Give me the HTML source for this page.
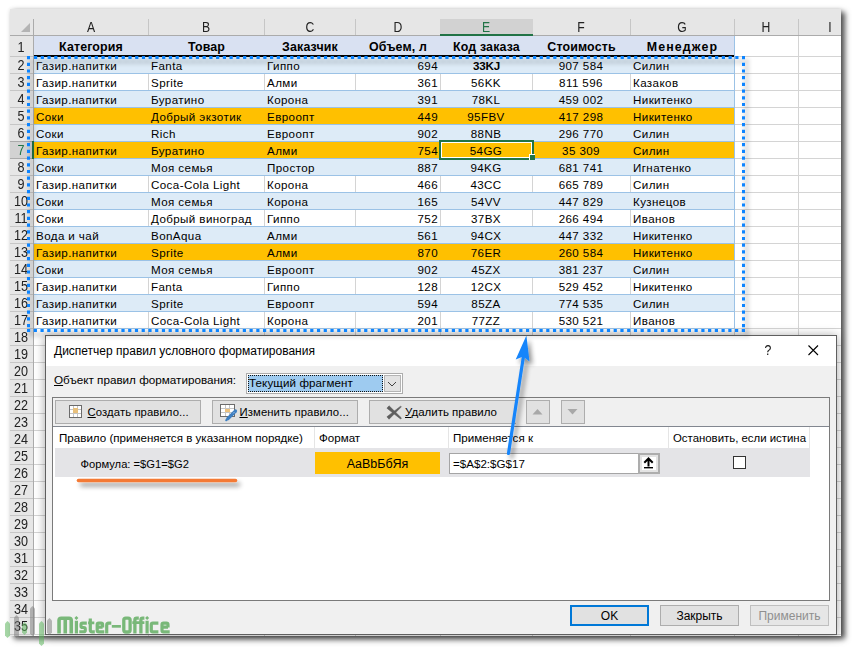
<!DOCTYPE html>
<html><head><meta charset="utf-8"><style>
html,body{margin:0;padding:0;}
body{width:852px;height:647px;position:relative;overflow:hidden;background:#fff;font-family:"Liberation Sans", sans-serif;}
body>div{position:absolute;box-sizing:content-box;}
.t{line-height:0;white-space:nowrap;}
#shadow{left:10px;top:9px;width:831px;height:627px;box-shadow:4px 3px 5.5px rgba(0,0,0,0.68),0 0 4px rgba(0,0,0,0.12);background:#fff}
</style></head><body>
<div id="shadow"></div>
<div style="left:10px;top:9px;width:831px;height:627px;background:#ffffff;"></div>
<div style="left:10px;top:9px;width:831px;height:26px;background:#e6e6e6;"></div>
<div style="left:441px;top:19px;width:91px;height:16px;background:#d2d2d2;"></div>
<div style="left:10px;top:35px;width:831px;height:1px;background:#ababab;"></div>
<div style="left:148px;top:19px;width:1px;height:16px;background:#c6c6c6;"></div>
<div style="left:264px;top:19px;width:1px;height:16px;background:#c6c6c6;"></div>
<div style="left:355px;top:19px;width:1px;height:16px;background:#c6c6c6;"></div>
<div style="left:440px;top:19px;width:1px;height:16px;background:#c6c6c6;"></div>
<div style="left:532px;top:19px;width:1px;height:16px;background:#c6c6c6;"></div>
<div style="left:630px;top:19px;width:1px;height:16px;background:#c6c6c6;"></div>
<div style="left:734px;top:19px;width:1px;height:16px;background:#c6c6c6;"></div>
<div style="left:798px;top:19px;width:1px;height:16px;background:#c6c6c6;"></div>
<div style="left:440px;top:19px;width:93px;height:16px;background:#d2d2d2;border-left:0"></div>
<div style="left:440px;top:34px;width:93px;height:2px;background:#217346;"></div>
<div style="left:10px;top:36px;width:23px;height:600px;background:#e6e6e6;"></div>
<div style="left:33px;top:19px;width:1px;height:617px;background:#ababab;"></div>
<div style="left:10px;top:142px;width:23px;height:16px;background:#d2d2d2;"></div>
<svg style="position:absolute;left:20px;top:22px" width="11" height="11"><path d="M10 1 L10 10 L1 10 Z" fill="#b4b4b4"/></svg>
<div style="left:10px;top:56px;width:23px;height:1px;background:#c6c6c6;"></div>
<div style="left:34px;top:56px;width:807px;height:1px;background:#d4d4d4;"></div>
<div style="left:10px;top:73px;width:23px;height:1px;background:#c6c6c6;"></div>
<div style="left:34px;top:73px;width:807px;height:1px;background:#d4d4d4;"></div>
<div style="left:10px;top:90px;width:23px;height:1px;background:#c6c6c6;"></div>
<div style="left:34px;top:90px;width:807px;height:1px;background:#d4d4d4;"></div>
<div style="left:10px;top:107px;width:23px;height:1px;background:#c6c6c6;"></div>
<div style="left:34px;top:107px;width:807px;height:1px;background:#d4d4d4;"></div>
<div style="left:10px;top:124px;width:23px;height:1px;background:#c6c6c6;"></div>
<div style="left:34px;top:124px;width:807px;height:1px;background:#d4d4d4;"></div>
<div style="left:10px;top:141px;width:23px;height:1px;background:#c6c6c6;"></div>
<div style="left:34px;top:141px;width:807px;height:1px;background:#d4d4d4;"></div>
<div style="left:10px;top:158px;width:23px;height:1px;background:#c6c6c6;"></div>
<div style="left:34px;top:158px;width:807px;height:1px;background:#d4d4d4;"></div>
<div style="left:10px;top:175px;width:23px;height:1px;background:#c6c6c6;"></div>
<div style="left:34px;top:175px;width:807px;height:1px;background:#d4d4d4;"></div>
<div style="left:10px;top:192px;width:23px;height:1px;background:#c6c6c6;"></div>
<div style="left:34px;top:192px;width:807px;height:1px;background:#d4d4d4;"></div>
<div style="left:10px;top:209px;width:23px;height:1px;background:#c6c6c6;"></div>
<div style="left:34px;top:209px;width:807px;height:1px;background:#d4d4d4;"></div>
<div style="left:10px;top:226px;width:23px;height:1px;background:#c6c6c6;"></div>
<div style="left:34px;top:226px;width:807px;height:1px;background:#d4d4d4;"></div>
<div style="left:10px;top:243px;width:23px;height:1px;background:#c6c6c6;"></div>
<div style="left:34px;top:243px;width:807px;height:1px;background:#d4d4d4;"></div>
<div style="left:10px;top:260px;width:23px;height:1px;background:#c6c6c6;"></div>
<div style="left:34px;top:260px;width:807px;height:1px;background:#d4d4d4;"></div>
<div style="left:10px;top:277px;width:23px;height:1px;background:#c6c6c6;"></div>
<div style="left:34px;top:277px;width:807px;height:1px;background:#d4d4d4;"></div>
<div style="left:10px;top:294px;width:23px;height:1px;background:#c6c6c6;"></div>
<div style="left:34px;top:294px;width:807px;height:1px;background:#d4d4d4;"></div>
<div style="left:10px;top:311px;width:23px;height:1px;background:#c6c6c6;"></div>
<div style="left:34px;top:311px;width:807px;height:1px;background:#d4d4d4;"></div>
<div style="left:10px;top:328px;width:23px;height:1px;background:#c6c6c6;"></div>
<div style="left:34px;top:328px;width:807px;height:1px;background:#d4d4d4;"></div>
<div style="left:10px;top:345px;width:23px;height:1px;background:#c6c6c6;"></div>
<div style="left:34px;top:345px;width:807px;height:1px;background:#d4d4d4;"></div>
<div style="left:10px;top:362px;width:23px;height:1px;background:#c6c6c6;"></div>
<div style="left:34px;top:362px;width:807px;height:1px;background:#d4d4d4;"></div>
<div style="left:10px;top:379px;width:23px;height:1px;background:#c6c6c6;"></div>
<div style="left:34px;top:379px;width:807px;height:1px;background:#d4d4d4;"></div>
<div style="left:10px;top:396px;width:23px;height:1px;background:#c6c6c6;"></div>
<div style="left:34px;top:396px;width:807px;height:1px;background:#d4d4d4;"></div>
<div style="left:10px;top:413px;width:23px;height:1px;background:#c6c6c6;"></div>
<div style="left:34px;top:413px;width:807px;height:1px;background:#d4d4d4;"></div>
<div style="left:10px;top:430px;width:23px;height:1px;background:#c6c6c6;"></div>
<div style="left:34px;top:430px;width:807px;height:1px;background:#d4d4d4;"></div>
<div style="left:10px;top:447px;width:23px;height:1px;background:#c6c6c6;"></div>
<div style="left:34px;top:447px;width:807px;height:1px;background:#d4d4d4;"></div>
<div style="left:10px;top:464px;width:23px;height:1px;background:#c6c6c6;"></div>
<div style="left:34px;top:464px;width:807px;height:1px;background:#d4d4d4;"></div>
<div style="left:10px;top:481px;width:23px;height:1px;background:#c6c6c6;"></div>
<div style="left:34px;top:481px;width:807px;height:1px;background:#d4d4d4;"></div>
<div style="left:10px;top:498px;width:23px;height:1px;background:#c6c6c6;"></div>
<div style="left:34px;top:498px;width:807px;height:1px;background:#d4d4d4;"></div>
<div style="left:10px;top:515px;width:23px;height:1px;background:#c6c6c6;"></div>
<div style="left:34px;top:515px;width:807px;height:1px;background:#d4d4d4;"></div>
<div style="left:10px;top:532px;width:23px;height:1px;background:#c6c6c6;"></div>
<div style="left:34px;top:532px;width:807px;height:1px;background:#d4d4d4;"></div>
<div style="left:10px;top:549px;width:23px;height:1px;background:#c6c6c6;"></div>
<div style="left:34px;top:549px;width:807px;height:1px;background:#d4d4d4;"></div>
<div style="left:10px;top:566px;width:23px;height:1px;background:#c6c6c6;"></div>
<div style="left:34px;top:566px;width:807px;height:1px;background:#d4d4d4;"></div>
<div style="left:10px;top:583px;width:23px;height:1px;background:#c6c6c6;"></div>
<div style="left:34px;top:583px;width:807px;height:1px;background:#d4d4d4;"></div>
<div style="left:10px;top:600px;width:23px;height:1px;background:#c6c6c6;"></div>
<div style="left:34px;top:600px;width:807px;height:1px;background:#d4d4d4;"></div>
<div style="left:10px;top:617px;width:23px;height:1px;background:#c6c6c6;"></div>
<div style="left:34px;top:617px;width:807px;height:1px;background:#d4d4d4;"></div>
<div style="left:10px;top:634px;width:23px;height:1px;background:#c6c6c6;"></div>
<div style="left:34px;top:634px;width:807px;height:1px;background:#d4d4d4;"></div>
<div style="left:148px;top:36px;width:1px;height:600px;background:#d4d4d4;"></div>
<div style="left:264px;top:36px;width:1px;height:600px;background:#d4d4d4;"></div>
<div style="left:355px;top:36px;width:1px;height:600px;background:#d4d4d4;"></div>
<div style="left:440px;top:36px;width:1px;height:600px;background:#d4d4d4;"></div>
<div style="left:532px;top:36px;width:1px;height:600px;background:#d4d4d4;"></div>
<div style="left:630px;top:36px;width:1px;height:600px;background:#d4d4d4;"></div>
<div style="left:734px;top:36px;width:1px;height:600px;background:#d4d4d4;"></div>
<div style="left:798px;top:36px;width:1px;height:600px;background:#d4d4d4;"></div>
<div style="left:10px;top:141px;width:23px;height:1px;background:#ababab;"></div>
<div style="left:10px;top:158px;width:23px;height:1px;background:#ababab;"></div>
<div style="left:32px;top:141px;width:2px;height:18px;background:#217346;"></div>
<div class="t" style="top:27.08px;font-size:14.2px;color:#222;transform:scaleX(0.86);left:-109.5px;width:400px;text-align:center;">A</div>
<div class="t" style="top:27.08px;font-size:14.2px;color:#222;transform:scaleX(0.86);left:6.0px;width:400px;text-align:center;">B</div>
<div class="t" style="top:27.08px;font-size:14.2px;color:#222;transform:scaleX(0.86);left:109.5px;width:400px;text-align:center;">C</div>
<div class="t" style="top:27.08px;font-size:14.2px;color:#222;transform:scaleX(0.86);left:197.5px;width:400px;text-align:center;">D</div>
<div class="t" style="top:27.08px;font-size:14.2px;color:#217346;transform:scaleX(0.86);left:286.0px;width:400px;text-align:center;">E</div>
<div class="t" style="top:27.08px;font-size:14.2px;color:#222;transform:scaleX(0.86);left:381.0px;width:400px;text-align:center;">F</div>
<div class="t" style="top:27.08px;font-size:14.2px;color:#222;transform:scaleX(0.86);left:482.0px;width:400px;text-align:center;">G</div>
<div class="t" style="top:27.08px;font-size:14.2px;color:#222;transform:scaleX(0.86);left:566.0px;width:400px;text-align:center;">H</div>
<div class="t" style="top:27.08px;font-size:14.2px;color:#222;transform:scaleX(0.86);left:630px;width:400px;text-align:center;">I</div>
<div class="t" style="top:47.15px;font-size:14px;color:#222;transform:scaleX(0.9);left:-179px;width:400px;text-align:center;">1</div>
<div class="t" style="top:65.15px;font-size:14px;color:#222;transform:scaleX(0.9);left:-179px;width:400px;text-align:center;">2</div>
<div class="t" style="top:82.15px;font-size:14px;color:#222;transform:scaleX(0.9);left:-179px;width:400px;text-align:center;">3</div>
<div class="t" style="top:99.15px;font-size:14px;color:#222;transform:scaleX(0.9);left:-179px;width:400px;text-align:center;">4</div>
<div class="t" style="top:116.15px;font-size:14px;color:#222;transform:scaleX(0.9);left:-179px;width:400px;text-align:center;">5</div>
<div class="t" style="top:133.15px;font-size:14px;color:#222;transform:scaleX(0.9);left:-179px;width:400px;text-align:center;">6</div>
<div class="t" style="top:150.15px;font-size:14px;color:#217346;transform:scaleX(0.9);left:-179px;width:400px;text-align:center;">7</div>
<div class="t" style="top:167.15px;font-size:14px;color:#222;transform:scaleX(0.9);left:-179px;width:400px;text-align:center;">8</div>
<div class="t" style="top:184.15px;font-size:14px;color:#222;transform:scaleX(0.9);left:-179px;width:400px;text-align:center;">9</div>
<div class="t" style="top:201.15px;font-size:14px;color:#222;transform:scaleX(0.9);left:-179px;width:400px;text-align:center;">10</div>
<div class="t" style="top:218.15px;font-size:14px;color:#222;transform:scaleX(0.9);left:-179px;width:400px;text-align:center;">11</div>
<div class="t" style="top:235.15px;font-size:14px;color:#222;transform:scaleX(0.9);left:-179px;width:400px;text-align:center;">12</div>
<div class="t" style="top:252.15px;font-size:14px;color:#222;transform:scaleX(0.9);left:-179px;width:400px;text-align:center;">13</div>
<div class="t" style="top:269.15px;font-size:14px;color:#222;transform:scaleX(0.9);left:-179px;width:400px;text-align:center;">14</div>
<div class="t" style="top:286.15px;font-size:14px;color:#222;transform:scaleX(0.9);left:-179px;width:400px;text-align:center;">15</div>
<div class="t" style="top:303.15px;font-size:14px;color:#222;transform:scaleX(0.9);left:-179px;width:400px;text-align:center;">16</div>
<div class="t" style="top:320.15px;font-size:14px;color:#222;transform:scaleX(0.9);left:-179px;width:400px;text-align:center;">17</div>
<div class="t" style="top:337.15px;font-size:14px;color:#222;transform:scaleX(0.9);left:-179px;width:400px;text-align:center;">18</div>
<div class="t" style="top:354.15px;font-size:14px;color:#222;transform:scaleX(0.9);left:-179px;width:400px;text-align:center;">19</div>
<div class="t" style="top:371.15px;font-size:14px;color:#222;transform:scaleX(0.9);left:-179px;width:400px;text-align:center;">20</div>
<div class="t" style="top:388.15px;font-size:14px;color:#222;transform:scaleX(0.9);left:-179px;width:400px;text-align:center;">21</div>
<div class="t" style="top:405.15px;font-size:14px;color:#222;transform:scaleX(0.9);left:-179px;width:400px;text-align:center;">22</div>
<div class="t" style="top:422.15px;font-size:14px;color:#222;transform:scaleX(0.9);left:-179px;width:400px;text-align:center;">23</div>
<div class="t" style="top:439.15px;font-size:14px;color:#222;transform:scaleX(0.9);left:-179px;width:400px;text-align:center;">24</div>
<div class="t" style="top:456.15px;font-size:14px;color:#222;transform:scaleX(0.9);left:-179px;width:400px;text-align:center;">25</div>
<div class="t" style="top:473.15px;font-size:14px;color:#222;transform:scaleX(0.9);left:-179px;width:400px;text-align:center;">26</div>
<div class="t" style="top:490.15px;font-size:14px;color:#222;transform:scaleX(0.9);left:-179px;width:400px;text-align:center;">27</div>
<div class="t" style="top:507.15px;font-size:14px;color:#222;transform:scaleX(0.9);left:-179px;width:400px;text-align:center;">28</div>
<div class="t" style="top:524.15px;font-size:14px;color:#222;transform:scaleX(0.9);left:-179px;width:400px;text-align:center;">29</div>
<div class="t" style="top:541.15px;font-size:14px;color:#222;transform:scaleX(0.9);left:-179px;width:400px;text-align:center;">30</div>
<div class="t" style="top:558.15px;font-size:14px;color:#222;transform:scaleX(0.9);left:-179px;width:400px;text-align:center;">31</div>
<div class="t" style="top:575.15px;font-size:14px;color:#222;transform:scaleX(0.9);left:-179px;width:400px;text-align:center;">32</div>
<div class="t" style="top:592.15px;font-size:14px;color:#222;transform:scaleX(0.9);left:-179px;width:400px;text-align:center;">33</div>
<div class="t" style="top:609.15px;font-size:14px;color:#222;transform:scaleX(0.9);left:-179px;width:400px;text-align:center;">34</div>
<div class="t" style="top:626.15px;font-size:14px;color:#222;transform:scaleX(0.9);left:-179px;width:400px;text-align:center;">35</div>
<div style="left:34px;top:36px;width:700px;height:19px;background:#d9e1f2;"></div>
<div style="left:34px;top:55px;width:700px;height:2px;background:#000;"></div>
<div class="t" style="top:46.70px;font-size:12.4px;color:#000;font-weight:700;left:-109.0px;width:400px;text-align:center;letter-spacing:0.15px;">Категория</div>
<div class="t" style="top:46.70px;font-size:12.4px;color:#000;font-weight:700;left:6.5px;width:400px;text-align:center;letter-spacing:0.15px;">Товар</div>
<div class="t" style="top:46.70px;font-size:12.4px;color:#000;font-weight:700;left:110.0px;width:400px;text-align:center;letter-spacing:0.15px;">Заказчик</div>
<div class="t" style="top:46.70px;font-size:12.4px;color:#000;font-weight:700;left:198.0px;width:400px;text-align:center;letter-spacing:0.15px;">Объем, л</div>
<div class="t" style="top:46.70px;font-size:12.4px;color:#000;font-weight:700;left:286.5px;width:400px;text-align:center;letter-spacing:0.15px;">Код заказа</div>
<div class="t" style="top:46.70px;font-size:12.4px;color:#000;font-weight:700;left:381.5px;width:400px;text-align:center;letter-spacing:0.15px;">Стоимость</div>
<div class="t" style="top:46.70px;font-size:12.4px;color:#000;font-weight:700;left:482.5px;width:400px;text-align:center;letter-spacing:1.1px;">Менеджер</div>
<div style="left:34px;top:57px;width:700px;height:16px;background:#ddebf7;"></div>
<div style="left:34px;top:73px;width:700px;height:1px;background:#9bc2e6;"></div>
<div class="t" style="top:65.98px;font-size:11.6px;color:#000;left:36px;letter-spacing:0.4px;">Газир.напитки</div>
<div class="t" style="top:65.98px;font-size:11.6px;color:#000;left:151px;letter-spacing:0.4px;">Fanta</div>
<div class="t" style="top:65.98px;font-size:11.6px;color:#000;left:267px;letter-spacing:0.4px;">Гиппо</div>
<div class="t" style="top:65.98px;font-size:11.6px;color:#000;left:38px;width:400px;text-align:right;letter-spacing:0.4px;">694</div>
<div class="t" style="top:65.98px;font-size:11.6px;color:#000;font-weight:700;left:286.5px;width:400px;text-align:center;letter-spacing:-0.2px;">33KJ</div>
<div class="t" style="top:65.98px;font-size:11.6px;color:#000;left:381.0px;width:400px;text-align:center;letter-spacing:0.4px;">907 584</div>
<div class="t" style="top:65.98px;font-size:11.6px;color:#000;left:633px;letter-spacing:0.4px;">Силин</div>
<div style="left:34px;top:90px;width:700px;height:1px;background:#9bc2e6;"></div>
<div class="t" style="top:82.98px;font-size:11.6px;color:#000;left:36px;letter-spacing:0.4px;">Газир.напитки</div>
<div class="t" style="top:82.98px;font-size:11.6px;color:#000;left:151px;letter-spacing:0.4px;">Sprite</div>
<div class="t" style="top:82.98px;font-size:11.6px;color:#000;left:267px;letter-spacing:0.4px;">Алми</div>
<div class="t" style="top:82.98px;font-size:11.6px;color:#000;left:38px;width:400px;text-align:right;letter-spacing:0.4px;">361</div>
<div class="t" style="top:82.98px;font-size:11.6px;color:#000;left:286.0px;width:400px;text-align:center;letter-spacing:0.4px;">56KK</div>
<div class="t" style="top:82.98px;font-size:11.6px;color:#000;left:381.0px;width:400px;text-align:center;letter-spacing:0.4px;">811 596</div>
<div class="t" style="top:82.98px;font-size:11.6px;color:#000;left:633px;letter-spacing:0.4px;">Казаков</div>
<div style="left:34px;top:91px;width:700px;height:16px;background:#ddebf7;"></div>
<div style="left:34px;top:107px;width:700px;height:1px;background:#9bc2e6;"></div>
<div class="t" style="top:99.98px;font-size:11.6px;color:#000;left:36px;letter-spacing:0.4px;">Газир.напитки</div>
<div class="t" style="top:99.98px;font-size:11.6px;color:#000;left:151px;letter-spacing:0.4px;">Буратино</div>
<div class="t" style="top:99.98px;font-size:11.6px;color:#000;left:267px;letter-spacing:0.4px;">Корона</div>
<div class="t" style="top:99.98px;font-size:11.6px;color:#000;left:38px;width:400px;text-align:right;letter-spacing:0.4px;">391</div>
<div class="t" style="top:99.98px;font-size:11.6px;color:#000;left:286.0px;width:400px;text-align:center;letter-spacing:0.4px;">78KL</div>
<div class="t" style="top:99.98px;font-size:11.6px;color:#000;left:381.0px;width:400px;text-align:center;letter-spacing:0.4px;">459 002</div>
<div class="t" style="top:99.98px;font-size:11.6px;color:#000;left:633px;letter-spacing:0.4px;">Никитенко</div>
<div style="left:34px;top:108px;width:700px;height:16px;background:#ffc000;"></div>
<div style="left:34px;top:124px;width:700px;height:1px;background:#9bc2e6;"></div>
<div class="t" style="top:116.98px;font-size:11.6px;color:#000;left:36px;letter-spacing:0.4px;">Соки</div>
<div class="t" style="top:116.98px;font-size:11.6px;color:#000;left:151px;letter-spacing:0.4px;">Добрый экзотик</div>
<div class="t" style="top:116.98px;font-size:11.6px;color:#000;left:267px;letter-spacing:0.4px;">Евроопт</div>
<div class="t" style="top:116.98px;font-size:11.6px;color:#000;left:38px;width:400px;text-align:right;letter-spacing:0.4px;">449</div>
<div class="t" style="top:116.98px;font-size:11.6px;color:#000;left:286.0px;width:400px;text-align:center;letter-spacing:0.4px;">95FBV</div>
<div class="t" style="top:116.98px;font-size:11.6px;color:#000;left:381.0px;width:400px;text-align:center;letter-spacing:0.4px;">417 298</div>
<div class="t" style="top:116.98px;font-size:11.6px;color:#000;left:633px;letter-spacing:0.4px;">Никитенко</div>
<div style="left:34px;top:125px;width:700px;height:16px;background:#ddebf7;"></div>
<div style="left:34px;top:141px;width:700px;height:1px;background:#9bc2e6;"></div>
<div class="t" style="top:133.98px;font-size:11.6px;color:#000;left:36px;letter-spacing:0.4px;">Соки</div>
<div class="t" style="top:133.98px;font-size:11.6px;color:#000;left:151px;letter-spacing:0.4px;">Rich</div>
<div class="t" style="top:133.98px;font-size:11.6px;color:#000;left:267px;letter-spacing:0.4px;">Евроопт</div>
<div class="t" style="top:133.98px;font-size:11.6px;color:#000;left:38px;width:400px;text-align:right;letter-spacing:0.4px;">902</div>
<div class="t" style="top:133.98px;font-size:11.6px;color:#000;left:286.0px;width:400px;text-align:center;letter-spacing:0.4px;">88NB</div>
<div class="t" style="top:133.98px;font-size:11.6px;color:#000;left:381.0px;width:400px;text-align:center;letter-spacing:0.4px;">296 770</div>
<div class="t" style="top:133.98px;font-size:11.6px;color:#000;left:633px;letter-spacing:0.4px;">Силин</div>
<div style="left:34px;top:142px;width:700px;height:16px;background:#ffc000;"></div>
<div style="left:34px;top:158px;width:700px;height:1px;background:#9bc2e6;"></div>
<div class="t" style="top:150.98px;font-size:11.6px;color:#000;left:36px;letter-spacing:0.4px;">Газир.напитки</div>
<div class="t" style="top:150.98px;font-size:11.6px;color:#000;left:151px;letter-spacing:0.4px;">Буратино</div>
<div class="t" style="top:150.98px;font-size:11.6px;color:#000;left:267px;letter-spacing:0.4px;">Алми</div>
<div class="t" style="top:150.98px;font-size:11.6px;color:#000;left:38px;width:400px;text-align:right;letter-spacing:0.4px;">754</div>
<div class="t" style="top:150.98px;font-size:11.6px;color:#000;left:286.0px;width:400px;text-align:center;letter-spacing:0.4px;">54GG</div>
<div class="t" style="top:150.98px;font-size:11.6px;color:#000;left:381.0px;width:400px;text-align:center;letter-spacing:0.4px;">35 309</div>
<div class="t" style="top:150.98px;font-size:11.6px;color:#000;left:633px;letter-spacing:0.4px;">Силин</div>
<div style="left:34px;top:159px;width:700px;height:16px;background:#ddebf7;"></div>
<div style="left:34px;top:175px;width:700px;height:1px;background:#9bc2e6;"></div>
<div class="t" style="top:167.98px;font-size:11.6px;color:#000;left:36px;letter-spacing:0.4px;">Соки</div>
<div class="t" style="top:167.98px;font-size:11.6px;color:#000;left:151px;letter-spacing:0.4px;">Моя семья</div>
<div class="t" style="top:167.98px;font-size:11.6px;color:#000;left:267px;letter-spacing:0.4px;">Простор</div>
<div class="t" style="top:167.98px;font-size:11.6px;color:#000;left:38px;width:400px;text-align:right;letter-spacing:0.4px;">887</div>
<div class="t" style="top:167.98px;font-size:11.6px;color:#000;left:286.0px;width:400px;text-align:center;letter-spacing:0.4px;">94KG</div>
<div class="t" style="top:167.98px;font-size:11.6px;color:#000;left:381.0px;width:400px;text-align:center;letter-spacing:0.4px;">681 741</div>
<div class="t" style="top:167.98px;font-size:11.6px;color:#000;left:633px;letter-spacing:0.4px;">Игнатенко</div>
<div style="left:34px;top:192px;width:700px;height:1px;background:#9bc2e6;"></div>
<div class="t" style="top:184.98px;font-size:11.6px;color:#000;left:36px;letter-spacing:0.4px;">Газир.напитки</div>
<div class="t" style="top:184.98px;font-size:11.6px;color:#000;left:151px;letter-spacing:0.4px;">Coca-Cola Light</div>
<div class="t" style="top:184.98px;font-size:11.6px;color:#000;left:267px;letter-spacing:0.4px;">Корона</div>
<div class="t" style="top:184.98px;font-size:11.6px;color:#000;left:38px;width:400px;text-align:right;letter-spacing:0.4px;">466</div>
<div class="t" style="top:184.98px;font-size:11.6px;color:#000;left:286.0px;width:400px;text-align:center;letter-spacing:0.4px;">43CC</div>
<div class="t" style="top:184.98px;font-size:11.6px;color:#000;left:381.0px;width:400px;text-align:center;letter-spacing:0.4px;">665 789</div>
<div class="t" style="top:184.98px;font-size:11.6px;color:#000;left:633px;letter-spacing:0.4px;">Силин</div>
<div style="left:34px;top:193px;width:700px;height:16px;background:#ddebf7;"></div>
<div style="left:34px;top:209px;width:700px;height:1px;background:#9bc2e6;"></div>
<div class="t" style="top:201.98px;font-size:11.6px;color:#000;left:36px;letter-spacing:0.4px;">Соки</div>
<div class="t" style="top:201.98px;font-size:11.6px;color:#000;left:151px;letter-spacing:0.4px;">Моя семья</div>
<div class="t" style="top:201.98px;font-size:11.6px;color:#000;left:267px;letter-spacing:0.4px;">Корона</div>
<div class="t" style="top:201.98px;font-size:11.6px;color:#000;left:38px;width:400px;text-align:right;letter-spacing:0.4px;">165</div>
<div class="t" style="top:201.98px;font-size:11.6px;color:#000;left:286.0px;width:400px;text-align:center;letter-spacing:0.4px;">54VV</div>
<div class="t" style="top:201.98px;font-size:11.6px;color:#000;left:381.0px;width:400px;text-align:center;letter-spacing:0.4px;">447 829</div>
<div class="t" style="top:201.98px;font-size:11.6px;color:#000;left:633px;letter-spacing:0.4px;">Кузнецов</div>
<div style="left:34px;top:226px;width:700px;height:1px;background:#9bc2e6;"></div>
<div class="t" style="top:218.98px;font-size:11.6px;color:#000;left:36px;letter-spacing:0.4px;">Соки</div>
<div class="t" style="top:218.98px;font-size:11.6px;color:#000;left:151px;letter-spacing:0.4px;">Добрый виноград</div>
<div class="t" style="top:218.98px;font-size:11.6px;color:#000;left:267px;letter-spacing:0.4px;">Гиппо</div>
<div class="t" style="top:218.98px;font-size:11.6px;color:#000;left:38px;width:400px;text-align:right;letter-spacing:0.4px;">752</div>
<div class="t" style="top:218.98px;font-size:11.6px;color:#000;left:286.0px;width:400px;text-align:center;letter-spacing:0.4px;">37BX</div>
<div class="t" style="top:218.98px;font-size:11.6px;color:#000;left:381.0px;width:400px;text-align:center;letter-spacing:0.4px;">266 494</div>
<div class="t" style="top:218.98px;font-size:11.6px;color:#000;left:633px;letter-spacing:0.4px;">Иванов</div>
<div style="left:34px;top:227px;width:700px;height:16px;background:#ddebf7;"></div>
<div style="left:34px;top:243px;width:700px;height:1px;background:#9bc2e6;"></div>
<div class="t" style="top:235.98px;font-size:11.6px;color:#000;left:36px;letter-spacing:0.4px;">Вода и чай</div>
<div class="t" style="top:235.98px;font-size:11.6px;color:#000;left:151px;letter-spacing:0.4px;">BonAqua</div>
<div class="t" style="top:235.98px;font-size:11.6px;color:#000;left:267px;letter-spacing:0.4px;">Алми</div>
<div class="t" style="top:235.98px;font-size:11.6px;color:#000;left:38px;width:400px;text-align:right;letter-spacing:0.4px;">561</div>
<div class="t" style="top:235.98px;font-size:11.6px;color:#000;left:286.0px;width:400px;text-align:center;letter-spacing:0.4px;">94CX</div>
<div class="t" style="top:235.98px;font-size:11.6px;color:#000;left:381.0px;width:400px;text-align:center;letter-spacing:0.4px;">447 332</div>
<div class="t" style="top:235.98px;font-size:11.6px;color:#000;left:633px;letter-spacing:0.4px;">Никитенко</div>
<div style="left:34px;top:244px;width:700px;height:16px;background:#ffc000;"></div>
<div style="left:34px;top:260px;width:700px;height:1px;background:#9bc2e6;"></div>
<div class="t" style="top:252.98px;font-size:11.6px;color:#000;left:36px;letter-spacing:0.4px;">Газир.напитки</div>
<div class="t" style="top:252.98px;font-size:11.6px;color:#000;left:151px;letter-spacing:0.4px;">Sprite</div>
<div class="t" style="top:252.98px;font-size:11.6px;color:#000;left:267px;letter-spacing:0.4px;">Алми</div>
<div class="t" style="top:252.98px;font-size:11.6px;color:#000;left:38px;width:400px;text-align:right;letter-spacing:0.4px;">870</div>
<div class="t" style="top:252.98px;font-size:11.6px;color:#000;left:286.0px;width:400px;text-align:center;letter-spacing:0.4px;">76ER</div>
<div class="t" style="top:252.98px;font-size:11.6px;color:#000;left:381.0px;width:400px;text-align:center;letter-spacing:0.4px;">260 584</div>
<div class="t" style="top:252.98px;font-size:11.6px;color:#000;left:633px;letter-spacing:0.4px;">Никитенко</div>
<div style="left:34px;top:261px;width:700px;height:16px;background:#ddebf7;"></div>
<div style="left:34px;top:277px;width:700px;height:1px;background:#9bc2e6;"></div>
<div class="t" style="top:269.98px;font-size:11.6px;color:#000;left:36px;letter-spacing:0.4px;">Соки</div>
<div class="t" style="top:269.98px;font-size:11.6px;color:#000;left:151px;letter-spacing:0.4px;">Моя семья</div>
<div class="t" style="top:269.98px;font-size:11.6px;color:#000;left:267px;letter-spacing:0.4px;">Евроопт</div>
<div class="t" style="top:269.98px;font-size:11.6px;color:#000;left:38px;width:400px;text-align:right;letter-spacing:0.4px;">902</div>
<div class="t" style="top:269.98px;font-size:11.6px;color:#000;left:286.0px;width:400px;text-align:center;letter-spacing:0.4px;">45ZX</div>
<div class="t" style="top:269.98px;font-size:11.6px;color:#000;left:381.0px;width:400px;text-align:center;letter-spacing:0.4px;">381 237</div>
<div class="t" style="top:269.98px;font-size:11.6px;color:#000;left:633px;letter-spacing:0.4px;">Силин</div>
<div style="left:34px;top:294px;width:700px;height:1px;background:#9bc2e6;"></div>
<div class="t" style="top:286.98px;font-size:11.6px;color:#000;left:36px;letter-spacing:0.4px;">Газир.напитки</div>
<div class="t" style="top:286.98px;font-size:11.6px;color:#000;left:151px;letter-spacing:0.4px;">Fanta</div>
<div class="t" style="top:286.98px;font-size:11.6px;color:#000;left:267px;letter-spacing:0.4px;">Гиппо</div>
<div class="t" style="top:286.98px;font-size:11.6px;color:#000;left:38px;width:400px;text-align:right;letter-spacing:0.4px;">128</div>
<div class="t" style="top:286.98px;font-size:11.6px;color:#000;left:286.0px;width:400px;text-align:center;letter-spacing:0.4px;">12CX</div>
<div class="t" style="top:286.98px;font-size:11.6px;color:#000;left:381.0px;width:400px;text-align:center;letter-spacing:0.4px;">529 452</div>
<div class="t" style="top:286.98px;font-size:11.6px;color:#000;left:633px;letter-spacing:0.4px;">Никитенко</div>
<div style="left:34px;top:295px;width:700px;height:16px;background:#ddebf7;"></div>
<div style="left:34px;top:311px;width:700px;height:1px;background:#9bc2e6;"></div>
<div class="t" style="top:303.98px;font-size:11.6px;color:#000;left:36px;letter-spacing:0.4px;">Газир.напитки</div>
<div class="t" style="top:303.98px;font-size:11.6px;color:#000;left:151px;letter-spacing:0.4px;">Sprite</div>
<div class="t" style="top:303.98px;font-size:11.6px;color:#000;left:267px;letter-spacing:0.4px;">Евроопт</div>
<div class="t" style="top:303.98px;font-size:11.6px;color:#000;left:38px;width:400px;text-align:right;letter-spacing:0.4px;">594</div>
<div class="t" style="top:303.98px;font-size:11.6px;color:#000;left:286.0px;width:400px;text-align:center;letter-spacing:0.4px;">85ZA</div>
<div class="t" style="top:303.98px;font-size:11.6px;color:#000;left:381.0px;width:400px;text-align:center;letter-spacing:0.4px;">774 535</div>
<div class="t" style="top:303.98px;font-size:11.6px;color:#000;left:633px;letter-spacing:0.4px;">Силин</div>
<div style="left:34px;top:328px;width:700px;height:1px;background:#9bc2e6;"></div>
<div class="t" style="top:320.98px;font-size:11.6px;color:#000;left:36px;letter-spacing:0.4px;">Газир.напитки</div>
<div class="t" style="top:320.98px;font-size:11.6px;color:#000;left:151px;letter-spacing:0.4px;">Coca-Cola Light</div>
<div class="t" style="top:320.98px;font-size:11.6px;color:#000;left:267px;letter-spacing:0.4px;">Корона</div>
<div class="t" style="top:320.98px;font-size:11.6px;color:#000;left:38px;width:400px;text-align:right;letter-spacing:0.4px;">201</div>
<div class="t" style="top:320.98px;font-size:11.6px;color:#000;left:286.0px;width:400px;text-align:center;letter-spacing:0.4px;">77ZZ</div>
<div class="t" style="top:320.98px;font-size:11.6px;color:#000;left:381.0px;width:400px;text-align:center;letter-spacing:0.4px;">530 521</div>
<div class="t" style="top:320.98px;font-size:11.6px;color:#000;left:633px;letter-spacing:0.4px;">Иванов</div>
<div style="left:734px;top:36px;width:1px;height:293px;background:#9bc2e6;"></div>
<div style="left:439px;top:140px;width:91px;height:16px;border:2px solid #217346;box-shadow:inset 0 0 0 1px #fff"></div>
<div style="left:529px;top:154px;width:5px;height:5px;background:#217346;border:1px solid #fff;border-right:0;border-bottom:0"></div>
<div style="left:45px;top:335px;width:790px;height:298px;border:1px solid #5f5f5f;background:#f0f0f0;box-shadow:0 1px 10px rgba(0,0,0,0.36)"></div>
<div style="left:46px;top:336px;width:790px;height:30px;background:#ffffff;"></div>
<div class="t" style="top:350.84px;font-size:12px;color:#000;left:54px;">Диспетчер правил условного форматирования</div>
<div class="t" style="top:349.98px;font-size:14.5px;color:#111;transform:scaleX(0.85);left:568px;width:400px;text-align:center;">?</div>
<svg style="position:absolute;left:807px;top:344px" width="12" height="12"><path d="M1.5 1.5 L11 11 M11 1.5 L1.5 11" stroke="#000" stroke-width="1.1"/></svg>
<div class="t" style="top:380.45px;font-size:11.7px;color:#000;left:54px;"><u>О</u>бъект правил форматирования:</div>
<div style="left:246px;top:373px;width:155px;height:19px;border:1px solid #adadad;background:#fff"></div>
<div style="left:248px;top:375px;width:135px;height:17px;background:#9ecbf0;outline:1px dotted #111;outline-offset:-1px"></div>
<div class="t" style="top:383.48px;font-size:11.6px;color:#000;left:249px;letter-spacing:0.1px;">Текущий фрагмент</div>
<div style="left:384px;top:375px;width:15px;height:15px;border:1px solid #b4b4b4;background:#e3e3e3"></div>
<svg style="position:absolute;left:386px;top:379px" width="12" height="9"><path d="M2 3 L6 7 L10 3" stroke="#444" stroke-width="1" fill="none"/></svg>
<div style="left:52px;top:397px;width:776px;height:202px;border:1px solid #7a7a7a;background:#fff"></div>
<div style="left:53px;top:398px;width:776px;height:28px;background:#f0f0f0;"></div>
<div style="left:53px;top:426px;width:776px;height:1px;background:#828790;"></div>
<div style="left:55px;top:400px;width:144px;height:22px;border:1px solid #adadad;background:#e1e1e1"></div>
<div style="left:212px;top:400px;width:144px;height:22px;border:1px solid #adadad;background:#e1e1e1"></div>
<div style="left:369px;top:400px;width:146px;height:22px;border:1px solid #adadad;border-right:0;background:#e1e1e1"></div>
<div style="left:526px;top:400px;width:22px;height:22px;border:1px solid #adadad;background:#e1e1e1"></div>
<div style="left:561px;top:400px;width:22px;height:22px;border:1px solid #adadad;background:#e1e1e1"></div>
<div class="t" style="top:412.08px;font-size:11.3px;color:#000;left:87.5px;letter-spacing:0.1px;"><u>С</u>оздать правило...</div>
<div class="t" style="top:412.08px;font-size:11.3px;color:#000;left:239.5px;letter-spacing:0.1px;"><u>И</u>зменить правило...</div>
<div class="t" style="top:412.02px;font-size:11.5px;color:#000;left:405px;"><u>У</u>далить правило</div>
<svg style="position:absolute;left:69px;top:405px" width="13" height="13">
<rect x="0.5" y="0.5" width="12" height="12" fill="#fff" stroke="#6b6b6b"/>
<path d="M1 4.5 H12 M1 8.5 H12 M4.5 1 V12 M8.5 1 V12" stroke="#c4c4c4" stroke-width="1"/>
<rect x="4" y="3" width="5" height="5" fill="#e8c07c"/>
</svg>
<svg style="position:absolute;left:219px;top:403px" width="20" height="19">
<rect x="1.5" y="1.5" width="14" height="12" fill="#fff" stroke="#6b6b6b"/>
<path d="M2 5.5 H15 M2 9.5 H15 M6.5 2 V13 M10.5 2 V13" stroke="#c4c4c4" stroke-width="1"/>
<rect x="6" y="6" width="5" height="3" fill="#edc27c"/>
<path d="M9 15.5 L16.5 8" stroke="#3d7fc2" stroke-width="3.2" stroke-linecap="round"/>
<path d="M7.2 17.3 L9.2 15.3" stroke="#3d7fc2" stroke-width="2" stroke-linecap="round"/>
<path d="M14.2 10.3 L15.2 9.3" stroke="#dfe9f5" stroke-width="0.8"/>
</svg>
<svg style="position:absolute;left:386px;top:405px" width="17" height="15"><path d="M0.94 3.20 L14.57 13.99 L15.43 13.01 L3.06 0.80 Z M14.67 1.13 L0.94 11.80 L3.06 14.20 L15.33 1.87 Z" fill="#5e5e5e" stroke="#5e5e5e" stroke-width="0.6" stroke-linejoin="round"/></svg>
<svg style="position:absolute;left:531px;top:406px" width="12" height="10"><path d="M1.5 8.5 L6.5 3 L11.5 8.5 Z" fill="#a8a8a8"/></svg>
<svg style="position:absolute;left:566px;top:407px" width="12" height="10"><path d="M1.5 2 L6.5 7.5 L11.5 2 Z" fill="#a8a8a8"/></svg>
<div style="left:314px;top:427px;width:1px;height:21px;background:#e5e5e5;"></div>
<div style="left:448px;top:427px;width:1px;height:21px;background:#e5e5e5;"></div>
<div style="left:668px;top:427px;width:1px;height:21px;background:#e5e5e5;"></div>
<div style="left:809px;top:427px;width:1px;height:21px;background:#e5e5e5;"></div>
<div class="t" style="top:437.98px;font-size:11.6px;color:#000;left:59px;">Правило (применяется в указанном порядке)</div>
<div class="t" style="top:437.98px;font-size:11.6px;color:#000;left:319px;">Формат</div>
<div class="t" style="top:437.98px;font-size:11.6px;color:#000;left:453px;">Применяется к</div>
<div class="t" style="top:438.05px;font-size:11.4px;color:#000;left:673px;">Остановить, если истина</div>
<div style="left:55px;top:448px;width:755px;height:29px;background:#e4e4e7;"></div>
<div class="t" style="top:464.12px;font-size:11.2px;color:#000;left:80.5px;">Формула: =$G1=$G2</div>
<div style="left:315px;top:452px;width:125px;height:22px;background:#ffc000;"></div>
<div class="t" style="top:463.67px;font-size:12.5px;color:#000;left:177.5px;width:400px;text-align:center;">AaBbБбЯя</div>
<div style="left:449px;top:453px;width:188px;height:19px;border:1px solid #a5a5a5;background:#fff"></div>
<div class="t" style="top:463.98px;font-size:11.6px;color:#000;left:453px;">=$A$2:$G$17</div>
<div style="left:638px;top:453px;width:18px;height:17px;border:2px solid #adadad;background:#fff;box-shadow:inset 0 0 0 2px #e3e3e3"></div>
<svg style="position:absolute;left:642px;top:456px" width="14" height="14"><path d="M3 6 L6.5 2.5 L10 6 M6.5 3 V9.5" stroke="#000" stroke-width="2" fill="none" stroke-linecap="square"/><rect x="2" y="11" width="9" height="1.4" fill="#000"/></svg>
<div style="left:733px;top:456px;width:11px;height:11px;border:1px solid #333;background:#fff"></div>
<div style="left:570px;top:605px;width:75px;height:17px;border:2px solid #0078d7;background:#e1e1e1"></div>
<div style="left:660px;top:605px;width:77px;height:19px;border:1px solid #adadad;background:#e1e1e1"></div>
<div style="left:750px;top:605px;width:77px;height:19px;border:1px solid #bfbfbf;background:#e6e6e6"></div>
<div class="t" style="top:615.84px;font-size:12px;color:#000;left:409.5px;width:400px;text-align:center;">OK</div>
<div class="t" style="top:615.84px;font-size:12px;color:#000;left:499.5px;width:400px;text-align:center;">Закрыть</div>
<div class="t" style="top:615.84px;font-size:12px;color:#8f8f8f;left:589.5px;width:400px;text-align:center;">Применить</div>
<svg style="position:absolute;left:0;top:0" width="852" height="647">
<defs><filter id="sh" filterUnits="userSpaceOnUse" x="0" y="0" width="852" height="647"><feGaussianBlur in="SourceAlpha" stdDeviation="2.5"/><feOffset dx="3" dy="4"/><feComponentTransfer><feFuncA type="linear" slope="0.45"/></feComponentTransfer><feMerge><feMergeNode/><feMergeNode in="SourceGraphic"/></feMerge></filter></defs>
<g filter="url(#sh)">
<path d="M34 57.5 H745" stroke="#0a84ff" stroke-width="3" stroke-dasharray="3.2 3.543" fill="none"/>
<path d="M743.5 56 V332" stroke="#0a84ff" stroke-width="3" stroke-dasharray="3.2 3.5" fill="none"/>
<path d="M27 330.5 H745" stroke="#0a84ff" stroke-width="3" stroke-dasharray="3.2 3.543" fill="none"/>
<path d="M28.5 56 V332" stroke="#0a84ff" stroke-width="3" stroke-dasharray="3.2 3.5" fill="none"/>
</g>
<g filter="url(#sh)">
<path d="M508.5 453.5 L523.5 356" stroke="#1685fb" stroke-width="3.2" stroke-linecap="round" fill="none"/>
<path d="M526.4 335.5 L515.7 359.4 L523.2 356.5 L529.5 361.4 Z" fill="#1685fb"/>
</g>
<g filter="url(#sh)">
<path d="M78.5 480.5 L235.5 480.5" stroke="#f47a35" stroke-width="3.6" stroke-linecap="round"/>
</g>
</svg>
<svg style="position:absolute;left:0;top:0" width="852" height="647">
<g><path d="M5 623.5 L7.5 621 L10 623.5 V635.5 L7.5 638 L5 635.5 Z" fill="rgba(92,180,92,0.55)"/><path d="M14 617.5 L16.5 615 L19 617.5 V635.5 L16.5 638 L14 635.5 Z" fill="rgba(120,120,120,0.5)"/><path d="M22 624.5 L24.5 622 L27 624.5 V632.5 L24.5 635 L22 632.5 Z" fill="rgba(92,180,92,0.55)"/><path d="M30 608.5 L32.5 606 L35 608.5 V633.5 L32.5 636 L30 633.5 Z" fill="rgba(120,120,120,0.5)"/><path d="M39 623.5 L41.5 621 L44 623.5 V643.5 L41.5 646 L39 643.5 Z" fill="rgba(92,180,92,0.55)"/><path d="M47 620.5 L49.5 618 L52 620.5 V632.5 L49.5 635 L47 632.5 Z" fill="rgba(120,120,120,0.5)"/></g>
</svg>
<svg style="position:absolute;left:0;top:0" width="852" height="647">
<g fill="none" stroke="#79b879" stroke-linecap="butt" stroke-linejoin="round">
<path d="M59.05 633.5 V620.3 Q59.05 618.2 61.2 618.2 H69.1 Q71.25 618.2 71.25 620.3 V633.5 M65.25 618.2 V633.5" stroke-width="3.6"/>
<path d="M76.4 620.8 V633.5 M147.1 620.8 V633.5 M90.3 618.6 V630 Q90.3 631.8 92.1 631.8 H94.8 M106.7 633.5 V625.2 Q106.7 623.2 108.7 623.2 H111.3" stroke-width="3.2"/>
<path d="M88.1 622.9 H94.3 M132.3 622.6 H138.6 M138.4 622.6 H144.4" stroke-width="2.6"/>
<path d="M86.8 623.1 H82.6 Q81 623.1 81 624.7 V625.9 Q81 627.5 82.6 627.5 H83.7 Q85.3 627.5 85.3 629.1 V630.2 Q85.3 631.8 83.7 631.8 H79.3" stroke-width="3.1"/>
<path d="M102.6 627.2 H97.3 M102.6 627.4 V624.8 Q102.6 623.2 101 623.2 H98.8 Q97.2 623.2 97.2 624.8 V630.2 Q97.2 631.8 98.8 631.8 H104.3" stroke-width="3.2"/>
<path d="M168 627.2 H162 M168 627.4 V624.8 Q168 623.2 166.4 623.2 H163.6 Q162 623.2 162 624.8 V630.2 Q162 631.8 163.6 631.8 H169.7" stroke-width="3.2"/>
<path d="M158.4 623.2 H152.9 Q151.3 623.2 151.3 624.8 V630.2 Q151.3 631.8 152.9 631.8 H158.4" stroke-width="3.2"/>
<rect x="123.8" y="618.1" width="6.3" height="13.9" rx="2" stroke-width="3.3"/>
<path d="M134.9 633.5 V620 Q134.9 618.2 136.7 618.2 H138.8 M140.9 633.5 V620 Q140.9 618.2 142.7 618.2 H144.4" stroke-width="3.3"/>
</g>
<g fill="#79b879">
<rect x="111.8" y="625" width="9.1" height="2.7"/>
<path d="M76.4 616 L78.4 618 L76.4 620 L74.4 618 Z M147.1 615.9 L149.1 617.9 L147.1 619.9 L145.1 617.9 Z"/>
</g>
</svg>
</body></html>
